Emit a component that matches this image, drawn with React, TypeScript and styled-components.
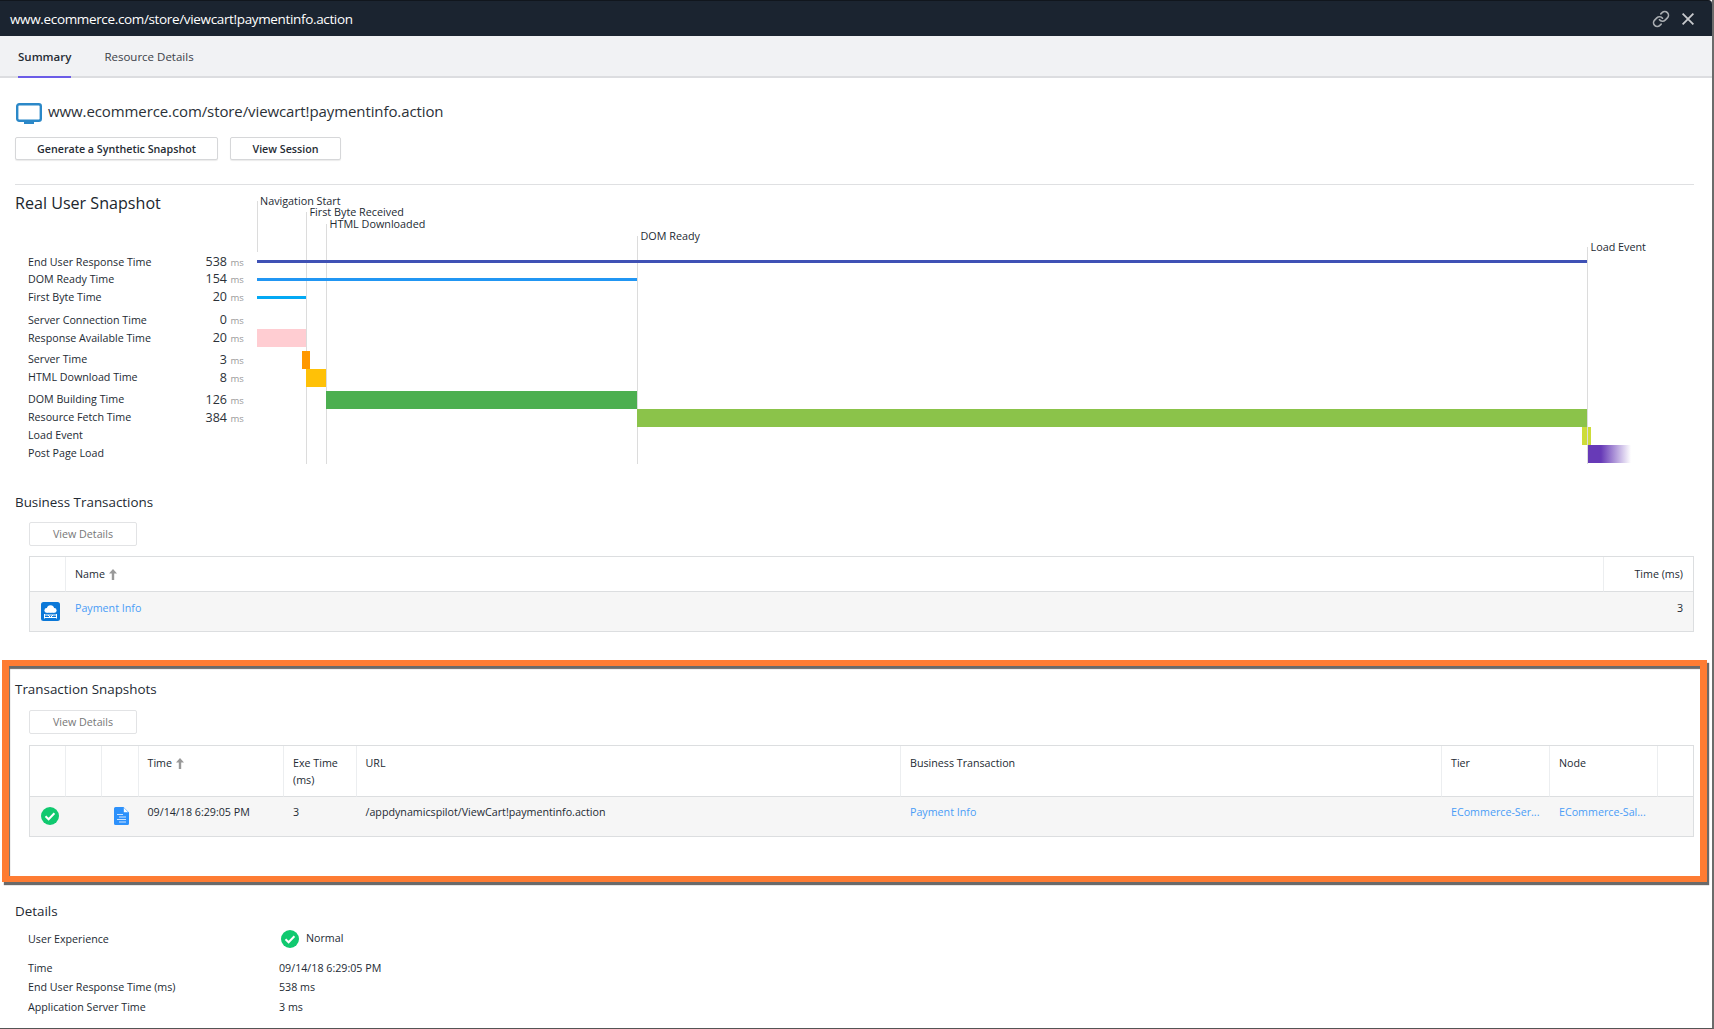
import { Link as LinkIcon } from 'lucide-react';
import styled, { createGlobalStyle } from 'styled-components';

const URL_TITLE = 'www.ecommerce.com/store/viewcart!paymentinfo.action';

const metrics = [
  { label: 'End User Response Time', value: '538', top: 0 },
  { label: 'DOM Ready Time', value: '154', top: -1 },
  { label: 'First Byte Time', value: '20', top: 0 },
  { label: 'Server Connection Time', value: '0', top: 5 },
  { label: 'Response Available Time', value: '20', top: 0 },
  { label: 'Server Time', value: '3', top: 4 },
  { label: 'HTML Download Time', value: '8', top: 0 },
  { label: 'DOM Building Time', value: '126', top: 4 },
  { label: 'Resource Fetch Time', value: '384', top: 0 },
  { label: 'Load Event', top: 0 },
  { label: 'Post Page Load', top: 0 },
];

// chart numbers are page coordinates, the viewBox starts at 257,190
const markers = [
  { label: 'Navigation Start', x: 257.5, labelX: 260, y: 201, end: 252 },
  { label: 'First Byte Received', x: 306.5, labelX: 309.5, y: 212, end: 464 },
  { label: 'HTML Downloaded', x: 326.5, labelX: 329.5, y: 224, end: 464 },
  { label: 'DOM Ready', x: 637.5, labelX: 640.5, y: 236, end: 464 },
  { label: 'Load Event', x: 1587.5, labelX: 1590.5, y: 247, end: 464 },
];

const bars = [
  { x: 257, y: 260, w: 1330, h: 3, fill: '#3f51b5' },
  { x: 257, y: 278, w: 380, h: 3, fill: '#2196f3' },
  { x: 257, y: 296, w: 49, h: 3, fill: '#03a9f4' },
  { x: 257, y: 329, w: 49, h: 18, fill: '#ffcdd2' },
  { x: 302, y: 351, w: 8, h: 18, fill: '#ff9800' },
  { x: 306, y: 369, w: 20, h: 18, fill: '#ffc107' },
  { x: 326, y: 391, w: 311, h: 18, fill: '#4caf50' },
  { x: 637, y: 409, w: 950, h: 18, fill: '#8bc34a' },
  { x: 1588, y: 445, w: 43, h: 18, fill: 'url(#postLoad)' },
];

const snapshotColumns = [35, 36, 36.5, 145.5, 72.5, 544.5, 541, 108, 108, 36];

function MonitorIcon() {
  return (
    <svg width="26" height="21" viewBox="0 0 26 21">
      <rect x="1.2" y="1.2" width="23.6" height="16.6" rx="2" fill="#fff" stroke="#2b88c8" strokeWidth="2.4" />
      <rect x="8" y="18" width="10" height="3" fill="#2b88c8" />
    </svg>
  );
}

function CloudIcon() {
  return (
    <svg width="19" height="19" viewBox="0 0 19 19">
      <rect width="19" height="19" rx="2.5" fill="#0b78d8" />
      <circle cx="9.5" cy="6.800" r="3.600" fill="#fff" />
      <circle cx="5.700" cy="8.400" r="2.300" fill="#fff" />
      <circle cx="13.300" cy="8.400" r="2.300" fill="#fff" />
      <rect x="5.700" y="7.500" width="7.600" height="3.200" fill="#fff" />
      <path d="M3.500 12v4.500M15.500 12v4.500M3.500 13h12M3.500 15.500h12M7 13l2.500 2.500 2.500-2.500" stroke="#fff" strokeWidth="1" fill="none" />
    </svg>
  );
}

function CheckIcon() {
  return (
    <svg width="18" height="18" viewBox="0 0 18 18">
      <circle cx="9" cy="9" r="9" fill="#10c96f" />
      <path d="M4.500 9.300l3.100 3 5.800-6" stroke="#fff" strokeWidth="2" fill="none" />
    </svg>
  );
}

function DocIcon() {
  return (
    <svg width="15" height="18" viewBox="0 0 15 18">
      <path d="M1.500 0H9.500L15 5.500V16.500A1.500 1.500 0 0 1 13.500 18H1.500A1.500 1.500 0 0 1 0 16.500V1.500A1.500 1.500 0 0 1 1.500 0z" fill="#2d91fb" />
      <path d="M9.800 .8V5.200H14.200z" fill="#fff" />
      <path d="M3 7.500h6M5 10h7M3 12.500h9M5 15h7" stroke="#cfe4fd" strokeWidth="1.200" fill="none" />
    </svg>
  );
}

function SortArrow() {
  return (
    <ArrowGlyph width="8" height="11" viewBox="0 0 8 11">
      <path d="M4 0L8 4.500H5.200V11H2.800V4.500H0z" fill="#999" />
    </ArrowGlyph>
  );
}

export default function App() {
  return (
    <Shell>
      <GlobalStyle />
      <TitleBar>
        <TitleText>{URL_TITLE}</TitleText>
        <TitleActions>
          <LinkIcon size={18} color="#a9adb1" strokeWidth={2.2} />
          <svg width="12" height="12" viewBox="0 0 12 12">
            <path d="M.6 .6l10.800 10.800M11.400 .6L.6 11.400" stroke="#c8cacd" strokeWidth="1.800" />
          </svg>
        </TitleActions>
      </TitleBar>
      <TabBar>
        <Tab $active>Summary</Tab>
        <Tab>Resource Details</Tab>
      </TabBar>

      <Overview>
        <PageTitle>
          <MonitorIcon />
          <span>{URL_TITLE}</span>
        </PageTitle>
        <ButtonRow>
          <ActionButton $width={203}>Generate a Synthetic Snapshot</ActionButton>
          <ActionButton $width={111}>View Session</ActionButton>
        </ButtonRow>
        <Divider />
        <SnapshotRow>
          <MetricColumn>
            <SnapshotTitle>Real User Snapshot</SnapshotTitle>
            <MetricList>
              {metrics.map((m) => (
                <Metric key={m.label} $top={m.top}>
                  <MetricLabel>{m.label}</MetricLabel>
                  {m.value && (
                    <>
                      <MetricValue>{m.value}</MetricValue>
                      <MetricUnit>ms</MetricUnit>
                    </>
                  )}
                </Metric>
              ))}
            </MetricList>
          </MetricColumn>
          <Waterfall width="1437" height="280" viewBox="257 190 1437 280">
            <defs>
              <linearGradient id="postLoad">
                <stop offset="0.3" stopColor="#673ab7" />
                <stop offset="1" stopColor="#673ab7" stopOpacity="0" />
              </linearGradient>
            </defs>
            <rect x={1582} y={427} width={9} height={18} fill="#cddc39" />
            {markers.map((m) => (
              <g key={m.label}>
                <line x1={m.x} x2={m.x} y1={m.y} y2={m.end} stroke="#dcdcdc" />
                <text x={m.labelX} y={m.y + 4}>
                  {m.label}
                </text>
              </g>
            ))}
            {bars.map((b) => (
              <rect key={b.y} x={b.x} y={b.y} width={b.w} height={b.h} fill={b.fill} />
            ))}
          </Waterfall>
        </SnapshotRow>
      </Overview>

      <PlainSection>
        <SectionTitle>Business Transactions</SectionTitle>
        <DetailsButton $top={10}>View Details</DetailsButton>
        <DataTable $top={10} $cellTop={7}>
          <colgroup>
            <col width="35" />
            <col />
            <col width="90" />
          </colgroup>
          <thead>
            <tr>
              <HeadCell $height={34} />
              <HeadCell $height={34}>
                Name <SortArrow />
              </HeadCell>
              <HeadCell $height={34} $right>
                Time (ms)
              </HeadCell>
            </tr>
          </thead>
          <tbody>
            <tr>
              <IconCell $height={39} $drop={3}>
                <CloudIcon />
              </IconCell>
              <BodyCell $height={39}>
                <CellLink>Payment Info</CellLink>
              </BodyCell>
              <BodyCell $height={39} $right>
                3
              </BodyCell>
            </tr>
          </tbody>
        </DataTable>
      </PlainSection>

      <HighlightSection>
        <SectionTitle>Transaction Snapshots</SectionTitle>
        <DetailsButton $top={11}>View Details</DetailsButton>
        <DataTable $top={11} $cellTop={6}>
          <colgroup>
            {snapshotColumns.map((w, i) => (
              <col key={i} width={w} />
            ))}
          </colgroup>
          <thead>
            <tr>
              <HeadCell $height={50} />
              <HeadCell $height={50} />
              <HeadCell $height={50} />
              <HeadCell $height={50}>
                Time <SortArrow />
              </HeadCell>
              <HeadCell $height={50}>
                Exe Time
                <br />
                (ms)
              </HeadCell>
              <HeadCell $height={50}>URL</HeadCell>
              <HeadCell $height={50}>Business Transaction</HeadCell>
              <HeadCell $height={50}>Tier</HeadCell>
              <HeadCell $height={50}>Node</HeadCell>
              <HeadCell $height={50} />
            </tr>
          </thead>
          <tbody>
            <tr>
              <IconCell $height={39} $drop={4}>
                <CheckIcon />
              </IconCell>
              <BodyCell $height={39} />
              <IconCell $height={39} $drop={4} $inset={13}>
                <DocIcon />
              </IconCell>
              <BodyCell $height={39}>09/14/18 6:29:05 PM</BodyCell>
              <BodyCell $height={39}>3</BodyCell>
              <BodyCell $height={39}>/appdynamicspilot/ViewCart!paymentinfo.action</BodyCell>
              <BodyCell $height={39}>
                <CellLink>Payment Info</CellLink>
              </BodyCell>
              <BodyCell $height={39}>
                <CellLink>ECommerce-Ser...</CellLink>
              </BodyCell>
              <BodyCell $height={39}>
                <CellLink>ECommerce-Sal...</CellLink>
              </BodyCell>
              <BodyCell $height={39} />
            </tr>
          </tbody>
        </DataTable>
      </HighlightSection>

      <DetailsSection>
        <SectionTitle>Details</SectionTitle>
        <ExperienceRow>
          <DetailLabel>User Experience</DetailLabel>
          <ExperienceValue>
            <CheckIcon />
            <span>Normal</span>
          </ExperienceValue>
        </ExperienceRow>
        <DetailGroup>
          <DetailRow>
            <DetailLabel>Time</DetailLabel>
            <span>09/14/18 6:29:05 PM</span>
          </DetailRow>
          <DetailRow>
            <DetailLabel>End User Response Time (ms)</DetailLabel>
            <span>538 ms</span>
          </DetailRow>
          <DetailRow>
            <DetailLabel>Application Server Time</DetailLabel>
            <span>3 ms</span>
          </DetailRow>
        </DetailGroup>
      </DetailsSection>
    </Shell>
  );
}

const GlobalStyle = createGlobalStyle`
  html, body {
    margin: 0;
    background: #fff;
  }
  * {
    box-sizing: border-box;
  }
`;

const Shell = styled.div`
  width: 1714px;
  height: 1029px;
  overflow: hidden;
  background: #fff;
  border-right: 2px solid #6b6b6b;
  border-bottom: 1px solid #555;
  font-family: 'Open Sans', 'Liberation Sans', sans-serif;
  font-size: 10.7px;
  color: #232a33;
`;

const TitleBar = styled.header`
  height: 36px;
  padding: 0 18px 0 10px;
  display: flex;
  align-items: center;
  justify-content: space-between;
  background: #1b2430;
  border-top: 1px solid #11161d;
  border-top-right-radius: 4px;
`;

const TitleText = styled.span`
  font-size: 13.5px;
  color: #fff;
  letter-spacing: -0.35px;
`;

const TitleActions = styled.div`
  display: flex;
  align-items: center;
  gap: 12px;
`;

const TabBar = styled.nav`
  height: 42px;
  padding-left: 18px;
  display: flex;
  gap: 33px;
  background: #f1f2f4;
  border-bottom: 2px solid #dcdde0;
`;

const Tab = styled.div<{ $active?: boolean }>`
  height: 42px;
  line-height: 42px;
  font-size: 11.5px;
  font-weight: ${(p) => (p.$active ? 600 : 400)};
  color: ${(p) => (p.$active ? '#262c34' : '#3b4148')};
  border-bottom: 2px solid ${(p) => (p.$active ? '#6b5ce7' : 'transparent')};
`;

const Overview = styled.section`
  padding: 25px 18px 0 15px;
`;

const PageTitle = styled.div`
  height: 21px;
  padding-left: 1px;
  display: flex;
  align-items: flex-start;
  gap: 6px;
  font-size: 15px;
  line-height: 16px;
  letter-spacing: -0.1px;
  color: #2b3138;
`;

const ButtonRow = styled.div`
  margin-top: 13px;
  display: flex;
  gap: 12px;
`;

const ActionButton = styled.button<{ $width: number }>`
  width: ${(p) => p.$width}px;
  height: 23px;
  padding: 0;
  background: #fff;
  border: 1px solid #d6d7d9;
  border-radius: 2px;
  box-shadow: 0 1px 1px rgba(0, 0, 0, 0.08);
  font: 600 10.7px 'Open Sans', 'Liberation Sans', sans-serif;
  color: #262c34;
`;

const Divider = styled.hr`
  margin: 24px 0 0;
  border: 0;
  border-top: 1px solid #dfe0e2;
`;

const SnapshotRow = styled.div`
  display: flex;
`;

const MetricColumn = styled.div`
  width: 242px;
  flex: none;
`;

const SnapshotTitle = styled.h2`
  margin: 7px 0 0;
  font-size: 16.1px;
  line-height: 22px;
  font-weight: 400;
  color: #20262d;
`;

const MetricList = styled.div`
  margin-top: 39px;
  padding-left: 13px;
  width: 227px;
`;

const Metric = styled.div<{ $top: number }>`
  height: 17.9px;
  margin-top: ${(p) => p.$top}px;
  display: flex;
  align-items: center;
`;

const MetricLabel = styled.span`
  flex: 1;
`;

const MetricValue = styled.span`
  font-size: 12.5px;
  color: #2b3138;
`;

const MetricUnit = styled.span`
  width: 15px;
  padding-left: 3.5px;
  padding-top: 2px;
  font-size: 9.5px;
  color: #9a9a9a;
`;

const Waterfall = styled.svg`
  display: block;
  flex: none;
  margin-top: 5px;
  text {
    font-family: 'Open Sans', 'Liberation Sans', sans-serif;
    font-size: 10.8px;
    fill: #232a33;
  }
`;

const PlainSection = styled.section`
  padding: 22px 18px 0 15px;
`;

const SectionTitle = styled.h3`
  margin: 0;
  font-size: 13.4px;
  line-height: 20px;
  font-weight: 400;
  color: #232a33;
`;

const DetailsButton = styled.button<{ $top: number }>`
  display: block;
  width: 108px;
  height: 24px;
  margin: ${(p) => p.$top}px 0 0 14px;
  padding: 0;
  background: #fff;
  border: 1px solid #e2e3e5;
  border-radius: 2px;
  font: 400 10.7px 'Open Sans', 'Liberation Sans', sans-serif;
  color: #777;
`;

const DataTable = styled.table<{ $top: number; $cellTop: number }>`
  width: 1665px;
  margin: ${(p) => p.$top}px 0 0 14px;
  table-layout: fixed;
  border-collapse: separate;
  border-spacing: 0;
  border: 1px solid #dcdee0;
  font-size: 10.7px;
  td {
    padding-top: ${(p) => p.$cellTop}px;
  }
`;

const HeadCell = styled.th<{ $height: number; $right?: boolean }>`
  height: ${(p) => p.$height + 1}px;
  padding: 9px ${(p) => (p.$right ? '10px' : '0')} 0 9px;
  vertical-align: top;
  line-height: 17px;
  font-weight: 400;
  text-align: ${(p) => (p.$right ? 'right' : 'left')};
  color: #232a33;
  border-bottom: 1px solid #dcdee0;
  & + & {
    border-left: 1px solid #eceef0;
  }
`;

const BodyCell = styled.td<{ $height: number; $right?: boolean }>`
  height: ${(p) => p.$height}px;
  padding: 0 ${(p) => (p.$right ? '10px' : '0')} 0 10px;
  vertical-align: top;
  line-height: 18px;
  background: #f6f6f6;
  text-align: ${(p) => (p.$right ? 'right' : 'left')};
  white-space: nowrap;
  overflow: hidden;
`;

const IconCell = styled.td<{ $height: number; $inset?: number; $drop: number }>`
  height: ${(p) => p.$height}px;
  padding: 0 0 0 ${(p) => p.$inset ?? 11}px;
  vertical-align: top;
  background: #f6f6f6;
  svg {
    display: block;
    margin-top: ${(p) => p.$drop}px;
  }
`;

const CellLink = styled.a`
  color: #4a9df6;
`;

const ArrowGlyph = styled.svg`
  margin-left: 1px;
  vertical-align: -2px;
`;

const HighlightSection = styled.section`
  margin: 28px 5px 0 2px;
  height: 222px;
  padding: 13px 6px 0 6px;
  border: solid #fe7c33;
  border-width: 6px 7px;
  box-shadow: 2px 3px 1px #6a6a6a, inset 1px 3px 1px #6a6a6a;
`;

const DetailsSection = styled.section`
  padding: 19px 18px 0 15px;
`;

const ExperienceRow = styled.div`
  height: 18px;
  margin-top: 9px;
  padding-left: 13px;
  display: grid;
  grid-template-columns: 253px auto;
  align-items: center;
`;

const ExperienceValue = styled.div`
  display: flex;
  align-items: center;
  gap: 7px;
  span {
    margin-top: -2px;
  }
`;

const DetailGroup = styled.div`
  margin-top: 10px;
  padding-left: 13px;
`;

const DetailRow = styled.div`
  height: 19px;
  display: grid;
  grid-template-columns: 251px auto;
  align-items: center;
  &:last-child {
    margin-top: 1px;
  }
`;

const DetailLabel = styled.span`
  color: #232a33;
`;
